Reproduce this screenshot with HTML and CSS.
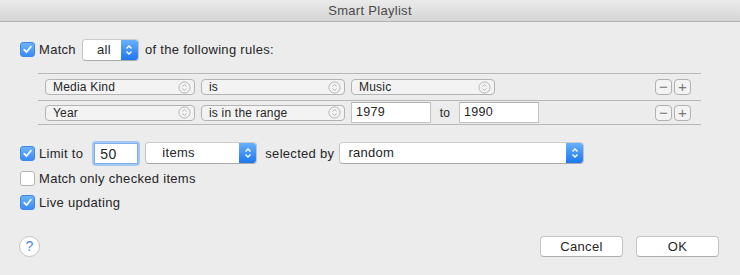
FILE: index.html
```html
<!DOCTYPE html>
<html lang="en">
<head>
    <meta charset="UTF-8">
    <title>Smart Playlist</title>
    <link rel="stylesheet" href="styles.css">
</head>
<body>
    <div class="window">
        <div class="titlebar">Smart Playlist</div>

        <div class="content">
            <div class="row match-row">
                <span class="check on"><svg viewBox="0 0 14 14"><path d="M3.5 7.2 L6 9.8 L10.6 4" /></svg></span>
                <span class="label">Match</span>
                <span class="popup blue all"><span class="value">all</span><span class="arrows"><svg viewBox="0 0 10 14"><path d="M2.5 5.5 L5 3 L7.5 5.5 M2.5 8.5 L5 11 L7.5 8.5" /></svg></span></span>
                <span class="label">of the following rules:</span>
            </div>

            <div class="rules">
                <div class="rule">
                    <span class="mini-popup kind">Media Kind<svg viewBox="0 0 14 14"><circle cx="7" cy="7" r="6" /><path d="M4.8 5.8 L7 3.8 L9.2 5.8 M4.8 8.2 L7 10.2 L9.2 8.2" /></svg></span>
                    <span class="mini-popup op">is<svg viewBox="0 0 14 14"><circle cx="7" cy="7" r="6" /><path d="M4.8 5.8 L7 3.8 L9.2 5.8 M4.8 8.2 L7 10.2 L9.2 8.2" /></svg></span>
                    <span class="mini-popup val">Music<svg viewBox="0 0 14 14"><circle cx="7" cy="7" r="6" /><path d="M4.8 5.8 L7 3.8 L9.2 5.8 M4.8 8.2 L7 10.2 L9.2 8.2" /></svg></span>
                    <span class="spacer"></span>
                    <span class="pm">&minus;</span><span class="pm">+</span>
                </div>
                <div class="rule">
                    <span class="mini-popup kind">Year<svg viewBox="0 0 14 14"><circle cx="7" cy="7" r="6" /><path d="M4.8 5.8 L7 3.8 L9.2 5.8 M4.8 8.2 L7 10.2 L9.2 8.2" /></svg></span>
                    <span class="mini-popup op">is in the range<svg viewBox="0 0 14 14"><circle cx="7" cy="7" r="6" /><path d="M4.8 5.8 L7 3.8 L9.2 5.8 M4.8 8.2 L7 10.2 L9.2 8.2" /></svg></span>
                    <span class="field year">1979</span>
                    <span class="to">to</span>
                    <span class="field year">1990</span>
                    <span class="spacer"></span>
                    <span class="pm">&minus;</span><span class="pm">+</span>
                </div>
            </div>

            <div class="row limit-row">
                <span class="check on"><svg viewBox="0 0 14 14"><path d="M3.5 7.2 L6 9.8 L10.6 4" /></svg></span>
                <span class="label">Limit to</span>
                <span class="focus"><span class="field count">50</span></span>
                <span class="popup blue items"><span class="value">items</span><span class="arrows"><svg viewBox="0 0 10 14"><path d="M2.5 5.5 L5 3 L7.5 5.5 M2.5 8.5 L5 11 L7.5 8.5" /></svg></span></span>
                <span class="label">selected by</span>
                <span class="popup blue random"><span class="value">random</span><span class="arrows"><svg viewBox="0 0 10 14"><path d="M2.5 5.5 L5 3 L7.5 5.5 M2.5 8.5 L5 11 L7.5 8.5" /></svg></span></span>
            </div>

            <div class="row option">
                <span class="check"></span>
                <span class="label">Match only checked items</span>
            </div>

            <div class="row option">
                <span class="check on"><svg viewBox="0 0 14 14"><path d="M3.5 7.2 L6 9.8 L10.6 4" /></svg></span>
                <span class="label">Live updating</span>
            </div>

            <div class="footer">
                <span class="help">?</span>
                <span class="spacer"></span>
                <span class="button">Cancel</span>
                <span class="button">OK</span>
            </div>
        </div>
    </div>
</body>
</html>
```

FILE: styles.css
```css
body {
    margin: 0;
    padding: 0;
    background: #ececec;
    font-family: "Liberation Sans", Arial, sans-serif;
    font-size: 13px;
    letter-spacing: 0.3px;
    color: #262626;
}
.window {
    width: 740px;
    height: 275px;
    overflow: hidden;
}
.titlebar {
    height: 21px;
    line-height: 22px;
    text-align: center;
    color: #4a4a4a;
    background: linear-gradient(#ebebeb, #d5d5d5);
    border-bottom: 1px solid #b3b3b3;
}
.content {
    padding: 0 20px;
}
.row {
    display: flex;
    align-items: center;
}
.label {
    margin-left: 4px;
}
.match-row {
    margin-top: 17px;
    height: 21px;
}
.check {
    width: 13px;
    height: 13px;
    border: 1px solid #b4b4b4;
    border-radius: 3px;
    background: #fff;
    display: inline-flex;
    flex: none;
}
.check.on {
    background: linear-gradient(#6cb3fa, #3b8df5);
    border-color: #3c87e8;
}
.check svg {
    width: 13px;
    height: 13px;
    fill: none;
    stroke: #fff;
    stroke-width: 1.8;
    stroke-linecap: round;
    stroke-linejoin: round;
}
.popup {
    display: inline-flex;
    height: 20px;
    border: 1px solid #c4c4c4;
    border-top-color: #cdcdcd;
    border-bottom-color: #aaaaaa;
    border-radius: 4px;
    background: #fff;
    overflow: hidden;
    flex: none;
}
.popup .value {
    flex: 1;
    line-height: 20px;
    padding-left: 8px;
}
.popup .arrows {
    width: 17px;
    background: linear-gradient(#68b0fa, #1d77ef);
    display: flex;
    align-items: center;
    justify-content: center;
}
.popup .arrows svg {
    width: 10px;
    height: 14px;
    fill: none;
    stroke: #fff;
    stroke-width: 1.4;
}
.match-row .popup {
    margin-left: 6px;
    margin-right: 2px;
}
.all {
    width: 55px;
}
.all .value {
    text-align: center;
    padding-left: 4px;
}
.rules {
    margin: 13px 0 0 18px;
    width: 663px;
    border-top: 1px solid #b8b8b8;
}
.rule {
    display: flex;
    align-items: center;
    padding-left: 7px;
    padding-right: 10px;
    border-bottom: 1px solid #b8b8b8;
}
.rule:first-child {
    height: 26px;
}
.rule:last-child {
    height: 23px;
}
.mini-popup {
    display: inline-flex;
    align-items: center;
    justify-content: space-between;
    box-sizing: border-box;
    height: 16px;
    padding: 0 3px 0 7px;
    margin-right: 6px;
    font-size: 12px;
    letter-spacing: 0.2px;
    border: 1px solid #b3b3b3;
    border-radius: 4px;
    background: #f3f3f3;
}
.mini-popup svg {
    width: 13px;
    height: 13px;
    fill: none;
    stroke: #b0b0b0;
    stroke-width: 1;
}
.kind {
    width: 150px;
}
.op {
    width: 144px;
}
.val {
    width: 144px;
}
.field {
    display: inline-block;
    box-sizing: border-box;
    background: #fff;
    border: 1px solid #c3c3c3;
    border-top-color: #b0b0b0;
    padding-left: 4px;
}
.year {
    width: 80px;
    height: 21px;
    line-height: 19px;
    font-size: 12.5px;
}
.to {
    width: 28px;
    text-align: center;
    font-size: 12px;
}
.spacer {
    flex: 1;
}
.pm {
    width: 17px;
    height: 16px;
    box-sizing: border-box;
    border: 1px solid #b0b0b0;
    border-radius: 4px;
    background: #f3f3f3;
    color: #7a7a7a;
    font-size: 15px;
    letter-spacing: 0;
    line-height: 13px;
    text-align: center;
    margin-left: 2px;
}
.limit-row {
    margin-top: 15px;
    height: 26px;
}
.focus {
    margin-left: 9px;
    padding: 2px;
    border-radius: 4px;
    background: #a3c8f5;
    display: inline-flex;
}
.count {
    width: 44px;
    height: 21px;
    line-height: 20px;
    font-size: 14px;
    padding-left: 5px;
    border-color: #7fb0ec;
}
.items {
    width: 110px;
    margin: 0 4px 0 5px;
}
.items .value {
    padding-left: 16px;
}
.random {
    width: 243px;
    margin-left: 5px;
}
.option {
    height: 24px;
}
.footer {
    display: flex;
    align-items: center;
    margin-top: 22px;
    margin-left: -1px;
}
.help {
    width: 19px;
    height: 19px;
    border: 1px solid #c3c3c3;
    border-radius: 50%;
    background: #fff;
    color: #4d8ad8;
    text-align: center;
    line-height: 19px;
    font-size: 14px;
    letter-spacing: 0;
}
.button {
    width: 81px;
    height: 19px;
    line-height: 19px;
    text-align: center;
    background: #fff;
    border: 1px solid #c4c4c4;
    border-bottom-color: #adadad;
    border-radius: 4px;
    margin-left: 13px;
}
.footer .button:last-child {
    margin-right: 1px;
}
```
